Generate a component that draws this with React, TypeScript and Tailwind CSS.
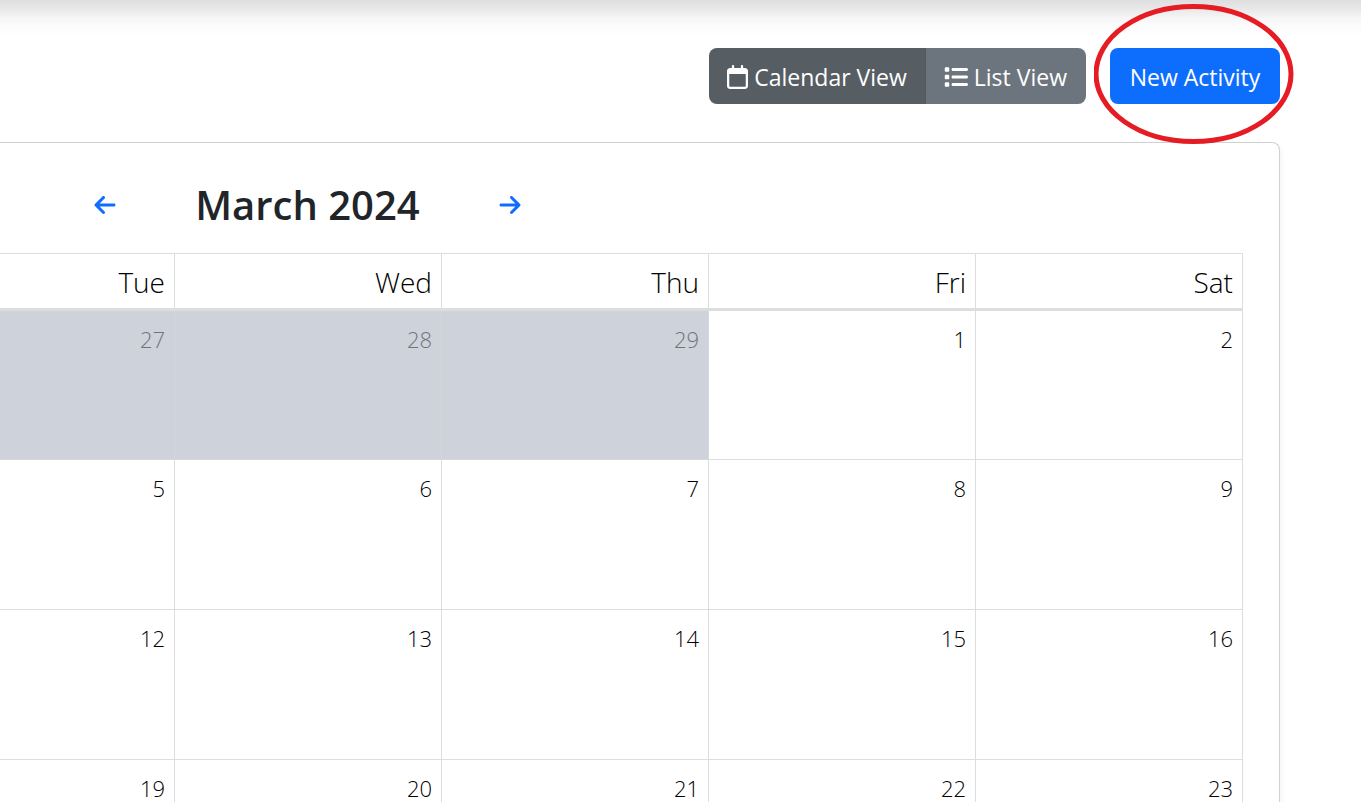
import { FaArrowLeft, FaArrowRight, FaList, FaRegCalendar } from "react-icons/fa6";

type Day = { date: number; outside?: boolean };

const weekdays = ["Tue", "Wed", "Thu", "Fri", "Sat"];

const weeks: Day[][] = [
  [
    { date: 27, outside: true },
    { date: 28, outside: true },
    { date: 29, outside: true },
    { date: 1 },
    { date: 2 },
  ],
  [5, 6, 7, 8, 9].map((date) => ({ date })),
  [12, 13, 14, 15, 16].map((date) => ({ date })),
  [19, 20, 21, 22, 23].map((date) => ({ date })),
];

function Toolbar() {
  return (
    <div className="flex items-center justify-end gap-6">
      <div className="flex h-14 text-[23px] text-white" role="group" aria-label="View">
        <button
          type="button"
          aria-pressed="true"
          className="flex items-center gap-1.5 rounded-l-lg border-r border-[#51585e] bg-[#565e64] pt-0.5 pr-[18px] pl-[18px]"
        >
          <FaRegCalendar className="h-6 w-[21px]" aria-hidden="true" />
          Calendar View
        </button>
        <button
          type="button"
          aria-pressed="false"
          className="flex items-center gap-1.5 rounded-r-lg bg-[#6c757d] pt-0.5 pr-[19px] pl-[18px]"
        >
          <FaList className="size-6" aria-hidden="true" />
          List View
        </button>
      </div>
      <div className="relative">
        <button
          type="button"
          className="h-14 min-w-[170px] rounded-lg bg-[#0d6efd] px-[18px] pt-0.5 text-[23px] text-white"
        >
          New Activity
        </button>
        <svg
          className="pointer-events-none absolute -top-11 -left-4 h-[140px] w-[200px]"
          viewBox="0 0 200 140"
          fill="none"
          aria-hidden="true"
        >
          <ellipse cx="99.5" cy="70" rx="97.5" ry="67.5" stroke="#e51c24" strokeWidth="5" />
        </svg>
      </div>
    </div>
  );
}

function MonthNav() {
  return (
    <div className="flex h-[110px] items-center pt-3.5 pl-[94px] text-[#0d6efd]">
      <button type="button" aria-label="Previous month">
        <FaArrowLeft className="h-6 w-[22px]" />
      </button>
      <h2 className="w-[383px] text-center text-[40px] font-semibold text-[#212529]">March 2024</h2>
      <button type="button" aria-label="Next month">
        <FaArrowRight className="h-6 w-[22px]" />
      </button>
    </div>
  );
}

function MonthTable() {
  return (
    <table className="w-full table-fixed border-separate border-spacing-0 border-t border-[#dddddd] text-right font-light text-black">
      <colgroup>
        <col className="w-[175px]" />
        <col />
        <col />
        <col />
        <col />
      </colgroup>
      <thead>
        <tr className="h-[57px]">
          {weekdays.map((name) => (
            <th
              key={name}
              scope="col"
              className="border-r border-b-3 border-[#dddddd] p-0 pt-0.5 pr-[9px] text-right text-[28px] leading-10 font-light"
            >
              {name}
            </th>
          ))}
        </tr>
      </thead>
      <tbody>
        {weeks.map((week) => (
          <tr key={week[0].date} className="h-[150px] first:h-[149px]">
            {week.map((day) => (
              <td
                key={day.date}
                className={
                  day.outside
                    ? "border-r border-b border-[#d6d7da] bg-[#ced2da] p-0 pt-3.5 pr-[9px] align-top text-[22px] leading-7 text-[#6c757d]"
                    : "border-r border-b border-[#dddddd] p-0 pt-3.5 pr-[9px] align-top text-[22px] leading-7"
                }
              >
                {day.date}
              </td>
            ))}
          </tr>
        ))}
      </tbody>
    </table>
  );
}

export default function App() {
  return (
    <main className="h-screen overflow-hidden bg-white bg-[linear-gradient(#dfdfdf,#e8e8e8_9px,#f6f6f6_18px,#fcfcfc_27px,#ffffff_37px)] pt-12 pr-[81px] font-['Open_Sans','Noto_Sans',sans-serif]">
      <Toolbar />
      <section
        aria-label="Activity calendar"
        className="mt-[38px] rounded-tr-lg border-t border-r border-[#d0d1d2] bg-white pr-9 shadow-[0_3px_6px_rgba(0,0,0,0.07)]"
      >
        <MonthNav />
        <MonthTable />
      </section>
    </main>
  );
}
